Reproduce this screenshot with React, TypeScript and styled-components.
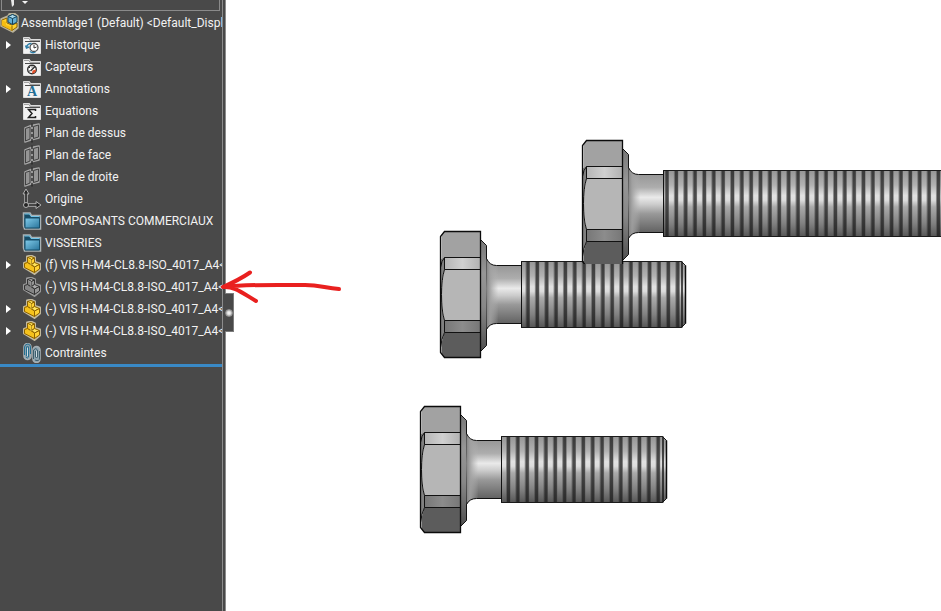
import React from 'react';
import styled, { createGlobalStyle } from 'styled-components';

const GlobalStyle = createGlobalStyle`
  * { box-sizing: border-box; }
  body { margin: 0; background: #ffffff; font-family: Roboto, 'Open Sans', sans-serif; }
`;

const Page = styled.div`
  position: relative;
  display: flex;
  min-height: 100vh;
  overflow: hidden;
`;

const Sidebar = styled.aside`
  flex: none;
  width: 223px;
  background: #494949;
  border-right: 1px solid #8c8c8c;
  color: #f2f2f2;
  font-size: 12px;
  overflow: hidden;
`;

const Splitter = styled.div`
  position: relative;
  flex: none;
  width: 3px;
  background: #494949;
  border-right: 1px solid #8c8c8c;
`;

const CollapseHandle = styled.button`
  position: absolute;
  top: 293px;
  left: 2px;
  display: flex;
  align-items: center;
  justify-content: center;
  width: 9px;
  height: 39px;
  padding: 0;
  border: 1px solid #7c7c7c;
  border-left: 0;
  background: #494949;
`;

const HandleDot = styled.span`
  flex: none;
  width: 8px;
  height: 8px;
  border: 1px solid #8f8f8f;
  border-radius: 50%;
  background: radial-gradient(#f0f0f0 25%, #a9a9a9 75%);
`;

const FilterBar = styled.div`
  display: flex;
  align-items: flex-start;
  height: 11px;
  margin: 0 2px 1px 1px;
  padding-left: 8px;
  border: 1px solid #8a8a8a;
  border-top: 0;
`;

const FilterButton = styled.button`
  display: flex;
  padding: 0;
  border: 0;
  background: none;
`;

const Tree = styled.ul`
  margin: 0;
  padding: 0;
  list-style: none;
  border-bottom: 3px solid #3989c6;
`;

const Row = styled.li<{ $root?: boolean }>`
  display: flex;
  align-items: center;
  height: 22px;
  padding-left: ${(p) => (p.$root ? '0' : '22px')};
  white-space: nowrap;

  &:has(> button) { padding-left: 0; }
`;

const Expander = styled.button`
  flex: none;
  display: flex;
  align-items: center;
  width: 22px;
  height: 22px;
  padding: 0 0 0 6px;
  border: 0;
  background: none;
`;

const Glyph = styled.svg`
  flex: none;
  display: block;
  width: 20px;
  height: 20px;
`;

const Label = styled.span<{ $root?: boolean }>`
  padding-left: ${(p) => (p.$root ? '1px' : '3px')};
  line-height: 22px;
`;

const Viewport = styled.main`
  flex: 1;
  min-width: 0;
  overflow: hidden;
  background: #ffffff;
`;

const Scene = styled.svg`
  display: block;
`;

const Markup = styled.svg`
  position: absolute;
  top: 268px;
  left: 217px;
  pointer-events: none;
`;

type IconName =
  | 'assembly' | 'history' | 'sensors' | 'notes' | 'equations'
  | 'plane' | 'origin' | 'folder' | 'part' | 'partGrey' | 'mates';

const FileFolder = ({ children }: { children: React.ReactNode }) => (
  <>
    <path d="M1.5 18.5V2.5H7.5L8.5 4.5H18.5V18.5Z" fill="#f2f2f2" stroke="#dddddd" />
    <path d="M2 3.5H7L8 5.5H18" fill="none" stroke="#a2a2a2" />
    <path d="M3 6.500H18" stroke="#4c4c4c" />
    {children}
  </>
);

const PartShape = ({ grey }: { grey?: boolean }) => {
  const line = grey ? '#343434' : '#8d6200';
  const top = grey ? '#a8a8a8' : '#ffe45c';
  const front = grey ? '#858585' : '#f6c21c';
  const side = grey ? '#969696' : '#ffd234';
  return (
    <>
      <path d="M5 1.500 9 .5 13 2.500V7L18 8.500V14.500L12.500 19 2 12.500V8L5 7Z" fill="#aaa18a" stroke={grey ? '#999999' : '#c3b99c'} strokeWidth="2" strokeLinejoin="round" />
      <path d="M2 8 5 7 6 2 12.500 10 12.500 18 2 12Z" fill={front} />
      <path d="M5.500 2.500 9 1.500 12.500 3 9.500 4.500Z" fill={top} stroke={line} />
      <path d="M5.500 2.500 9.500 4.500V9.500L5.500 8Z" fill={front} stroke={line} />
      <path d="M9.500 4.500 12.500 3V7.500L9.500 9.500Z" fill={side} stroke={line} />
      <path d="M9.500 9.500 12.500 7.500 17.500 9.500 12.500 12Z" fill={top} stroke={line} />
      <path d="M2.500 8.500 5.500 7.500 12.500 12V17.500L2.500 12.500Z" fill={front} stroke={line} />
      <path d="M12.500 12 17.500 9.500V14L12.500 17.500Z" fill={side} stroke={line} />
      <path d="M6 3.500 9 5V10" fill="none" stroke={top} strokeWidth=".8" />
    </>
  );
};

const shapes: Record<IconName, React.ReactNode> = {
  assembly: (
    <>
      <path d="M1 6 8 3 9 1 14 0 18 3V15L13 19 1 13Z" fill="#c9c1a4" stroke="#b9b299" strokeWidth="1.500" strokeLinejoin="round" />
      <path d="M2 7 7 5V10L12 12 17 10V14L12 17.500 2 12.500Z" fill="#ffd22e" stroke="#8b6100" />
      <path d="M2 7 6 9V12L12 14.500V17.500L2 12.500Z" fill="#f5bd12" />
      <path d="M12 13V17" stroke="#916700" />
      <path d="M8 3.500 12.500 1.500 17 3.500V9L12.500 11.500 8 9Z" fill="#62aed4" stroke="#17445c" />
      <path d="M8 3.500 12.500 5.500 17 3.500 12.500 1.500Z" fill="#a8d7e9" stroke="#17445c" />
      <path d="M12.500 5.500V11.500" stroke="#17445c" />
    </>
  ),
  history: (
    <FileFolder>
      <circle cx="12" cy="12.500" r="4" fill="#ffffff" stroke="#505050" strokeWidth="1.300" />
      <path d="M12 10V13L14.500 12" fill="none" stroke="#333333" />
      <path d="M4.500 12.500A5 5 0 0 1 9.500 8.500M3.500 10.500 4.500 13 7 12M8 16.500A5 5 0 0 0 13.500 17" fill="none" stroke="#2f7fa9" strokeWidth="1.400" />
    </FileFolder>
  ),
  sensors: (
    <FileFolder>
      <circle cx="10" cy="12.500" r="4.300" fill="#ffffff" stroke="#303030" strokeWidth="1.400" />
      <path d="M7 10.500H8M10 9.500V10.500M7 14H8" stroke="#303030" />
      <path d="M8.500 14 13 9.500" stroke="#303030" strokeWidth="1.500" />
      <path d="M10 16.500 10.500 13.500 14 12.500A4 4 0 0 1 10 16.500Z" fill="#e4512b" />
    </FileFolder>
  ),
  notes: (
    <FileFolder>
      <text x="10" y="17" textAnchor="middle" fontFamily="Liberation Serif, serif" fontWeight="700" fontSize="14" fill="#256f96">A</text>
    </FileFolder>
  ),
  equations: (
    <FileFolder>
      <path d="M13.500 10V8.500H6.500L10 12.500 6.500 16.500H13.500V15" fill="none" stroke="#222222" strokeWidth="1.500" />
    </FileFolder>
  ),
  plane: (
    <>
      <path d="M3 5 9 2.500 17 1V15L9 17 3 19Z" fill="#9a9a9a" stroke="#a6a6a6" strokeWidth="1.500" strokeLinejoin="round" />
      <path d="M3.500 5.500 8 4V16L3.500 18ZM11.500 3.500 16.500 2V14L11.500 15.500Z" fill="#949494" stroke="#424242" />
      <path d="M10 .5V4M10 6V9M10 11V14M10 16V19.500" stroke="#262626" strokeWidth="1.300" />
    </>
  ),
  origin: (
    <>
      <path d="M4 16V3M4 16H17" stroke="#b1b1b1" strokeWidth="3.500" fill="none" />
      <path d="M1 5 4 0 7 5ZM14 12.500 19 16 14 19.500Z" fill="#262626" stroke="#b1b1b1" />
      <path d="M4 16V4M4 16H16" stroke="#242424" strokeWidth="1.600" />
      <circle cx="4" cy="16" r="2.500" fill="#242424" stroke="#b1b1b1" />
    </>
  ),
  folder: (
    <>
      <path d="M1.500 2H8L9.500 4.500H18.500V18H2.500L1.500 15Z" fill="#174c66" stroke="#aab2b5" strokeWidth="1.500" />
      <path d="M2.500 3H7.500L9 5.500H17.500" fill="none" stroke="#73c4e7" />
      <path d="M3 7H17.500V17H3Z" fill="url(#folder-fill)" stroke="#164f6b" />
    </>
  ),
  part: <PartShape />,
  partGrey: <PartShape grey />,
  mates: (
    <>
      <path d="M2 4A3.500 3.500 0 0 1 9 4V13A3.500 3.500 0 0 1 2 13ZM11 7A3.500 3.500 0 0 1 18 7V16A3 3 0 0 1 11 16Z" fill="#8da3ae" stroke="#a5afb4" strokeWidth="1.600" />
      <path d="M4.500 13V4Q5.500 2 6.500 4V14Q5.500 16 4 14M2.500 12V4Q3 1 6 1Q8.500 1.500 8.500 4V11" fill="none" stroke="#256f91" />
      <path d="M13.500 8V14Q14.500 16 15.500 14V7Q14 4 11.500 7V16M13 17Q17.500 19 17.500 15V8" fill="none" stroke="#3d5e6d" />
      <path d="M5.500 5V13M14.500 8V14" stroke="#d2dee3" />
    </>
  ),
};

const Icon = ({ name }: { name: IconName }) => (
  <Glyph viewBox="0 0 20 20" aria-hidden="true">{shapes[name]}</Glyph>
);

const items: { icon: IconName; label: string; expandable?: boolean }[] = [
  { icon: 'history', label: 'Historique', expandable: true },
  { icon: 'sensors', label: 'Capteurs' },
  { icon: 'notes', label: 'Annotations', expandable: true },
  { icon: 'equations', label: 'Equations' },
  { icon: 'plane', label: 'Plan de dessus' },
  { icon: 'plane', label: 'Plan de face' },
  { icon: 'plane', label: 'Plan de droite' },
  { icon: 'origin', label: 'Origine' },
  { icon: 'folder', label: 'COMPOSANTS COMMERCIAUX' },
  { icon: 'folder', label: 'VISSERIES' },
  { icon: 'part', label: '(f) VIS H-M4-CL8.8-ISO_4017_A4<', expandable: true },
  { icon: 'partGrey', label: '(-) VIS H-M4-CL8.8-ISO_4017_A4<' },
  { icon: 'part', label: '(-) VIS H-M4-CL8.8-ISO_4017_A4<', expandable: true },
  { icon: 'part', label: '(-) VIS H-M4-CL8.8-ISO_4017_A4<', expandable: true },
  { icon: 'mates', label: 'Contraintes' },
];

type BoltProps = { x: number; y: number; length: number; first: number; open?: boolean };

/* Side view of a hex bolt; (x, y) is the top-left corner of the head. */
const Bolt = ({ x, y, length, first, open }: BoltProps) => {
  const end = 81 + length;
  const grooves: number[] = [];
  for (let g = first; g < end - 3; g += 9.36) grooves.push(g);
  return (
    <g transform={`translate(${x} ${y})`}>
      <path d="M40 8 46 14V114L40 120Z" fill="url(#washer)" stroke="#111111" />
      <path d="M46 27Q49 34 56 34H81V92H56Q49 92 46 98Z" fill="url(#neck)" />
      <path d="M46 27H70V98H46Z" fill="url(#neck-edge)" clipPath="url(#neck-clip)" />
      <path d="M46 27Q49 34 56 34H81M46 98Q49 92 56 92H81" fill="none" stroke="#111111" />
      <path d={open ? `M81 30H${end}V96H81Z` : `M81 30H${end - 4}L${end} 34V92L${end - 4} 96H81Z`} fill="url(#thread)" stroke="#151515" />
      {grooves.map((g) => (
        <g key={g}>
          <rect x={g - 2.500} y="30" width="4.500" height="66" fill="url(#groove-side)" />
          <rect x={g - 1.500} y="30" width="3" height="66" fill="url(#groove)" />
        </g>
      ))}
      <path d={`M81 30H${end - 4}M81 96H${end - 4}`} stroke="#1b1b1b" />
      <path d="M81 30V96" stroke="#111111" />
      {!open && <path d={`M${end - 3.500} 30V96`} stroke="#171717" strokeWidth="1.500" />}
      {!open && <path d={`M${end} 34V92`} stroke="#0c0c0c" strokeWidth="1.500" />}
      <path d="M4 0H40V26H5L1 38V4Z" fill="#a2a2a2" />
      <path d="M4 26H40V38H4Z" fill="url(#bevel-top)" />
      <path d="M4 38H40V89H4L1 68V58Z" fill="#b6b6b6" />
      <path d="M4 89H40V101H4Z" fill="url(#bevel-bottom)" />
      <path d="M4 101H40V126H4L1 122V112Z" fill="#5c5c5c" />
      <path d="M0 28 4 26V38Q1 48 1 63Q1 79 4 89V101L0 112Z" fill="#808080" />
      <path d="M4 26H40M4 38H40M4 89H40M4 101H40" stroke="#111111" />
      <path d="M4 38Q1 48 1 63Q1 79 4 89M4 26V38M4 89V101M4 26Q1 29 0 36M4 101Q1 107 0 116" fill="none" stroke="#111111" />
      <path d="M4 0H40V126H4L0 121V5Z" fill="none" stroke="#0b0b0b" strokeWidth="1.300" />
    </g>
  );
};

const Model = () => (
  <Scene width="100%" height="611" role="img" aria-label="Trois vis à tête hexagonale">
    <defs>
      <linearGradient id="thread" x1="0" y1="0" x2="0" y2="1">
        <stop offset="0" stopColor="#969696" />
        <stop offset=".22" stopColor="#b2b2b2" />
        <stop offset=".38" stopColor="#e1e1e1" />
        <stop offset=".45" stopColor="#dddddd" />
        <stop offset=".55" stopColor="#ababab" />
        <stop offset=".8" stopColor="#828282" />
        <stop offset="1" stopColor="#565656" />
      </linearGradient>
      <linearGradient id="groove" x1="0" y1="0" x2="0" y2="1">
        <stop offset="0" stopColor="#3a3a3a" />
        <stop offset=".4" stopColor="#4c4c4c" />
        <stop offset="1" stopColor="#2a2a2a" />
      </linearGradient>
      <linearGradient id="groove-side" x1="0" y1="0" x2="0" y2="1">
        <stop offset="0" stopColor="#707070" />
        <stop offset=".4" stopColor="#8f8f8f" />
        <stop offset="1" stopColor="#4a4a4a" />
      </linearGradient>
      <linearGradient id="neck" x1="0" y1="0" x2="0" y2="1">
        <stop offset="0" stopColor="#8b8b8b" />
        <stop offset=".28" stopColor="#adadad" />
        <stop offset=".42" stopColor="#eaeaea" />
        <stop offset=".52" stopColor="#cccccc" />
        <stop offset=".65" stopColor="#999999" />
        <stop offset="1" stopColor="#505050" />
      </linearGradient>
      <linearGradient id="neck-edge">
        <stop offset="0" stopColor="#858585" />
        <stop offset=".15" stopColor="#a0a0a0" stopOpacity=".9" />
        <stop offset=".5" stopColor="#b5b5b5" stopOpacity="0" />
      </linearGradient>
      <clipPath id="neck-clip">
        <path d="M46 27Q49 34 56 34H81V92H56Q49 92 46 98Z" />
      </clipPath>
      <linearGradient id="washer" x1="0" y1="0" x2="0" y2="1">
        <stop offset="0" stopColor="#777777" />
        <stop offset=".3" stopColor="#969696" />
        <stop offset=".6" stopColor="#888888" />
        <stop offset="1" stopColor="#505050" />
      </linearGradient>
      <linearGradient id="bevel-top">
        <stop offset="0" stopColor="#b5b5b5" />
        <stop offset=".5" stopColor="#d0d0d0" />
        <stop offset="1" stopColor="#b1b1b1" />
      </linearGradient>
      <linearGradient id="bevel-bottom">
        <stop offset="0" stopColor="#777777" />
        <stop offset=".5" stopColor="#8c8c8c" />
        <stop offset="1" stopColor="#777777" />
      </linearGradient>
      <clipPath id="behind">
        <rect width="4000" height="264" />
      </clipPath>
    </defs>
    <Bolt x={194.500} y={406.500} length={165} first={88} />
    <Bolt x={214.500} y={231.500} length={164} first={87.500} />
    <g clipPath="url(#behind)">
      <Bolt x={356.500} y={140.500} length={3000} first={84.500} open />
    </g>
  </Scene>
);

export default function App() {
  return (
    <>
      <GlobalStyle />
      <Page>
        <Sidebar>
          <FilterBar>
            <FilterButton aria-label="Filtrer">
              <svg width="18" height="8" aria-hidden="true">
                <path d="M1 0H4V5L2 7Z" fill="#e8e8e8" />
                <path d="M12 1H18L15 4Z" fill="#f4f4f4" />
              </svg>
            </FilterButton>
          </FilterBar>
          <Tree>
            <Row $root>
              <Icon name="assembly" />
              <Label $root>Assemblage1 (Default) &lt;Default_Displ</Label>
            </Row>
            {items.map((item, i) => (
              <Row key={i}>
                {item.expandable && (
                  <Expander aria-label={`Développer ${item.label}`}>
                    <svg width="5" height="8" aria-hidden="true">
                      <path d="M0 0 5 4 0 8Z" fill="#ffffff" />
                    </svg>
                  </Expander>
                )}
                <Icon name={item.icon} />
                <Label>{item.label}</Label>
              </Row>
            ))}
          </Tree>
        </Sidebar>
        <Splitter>
          <CollapseHandle aria-label="Réduire le panneau">
            <HandleDot />
          </CollapseHandle>
        </Splitter>
        <Viewport>
          <Model />
        </Viewport>
        <Markup width="128" height="38" aria-hidden="true">
          <path d="M122 21C108 20 103 17 88 17C60 17 33 16 6 19M33 4.500C25 10 15 15 6 19C17 18 24 24 39 33" fill="none" stroke="#e9201f" strokeWidth="4" strokeLinecap="round" strokeLinejoin="round" />
        </Markup>
        <svg width="0" height="0" aria-hidden="true">
          <defs>
            <linearGradient id="folder-fill" x1="0" y1="0" x2="1" y2="1">
              <stop offset="0" stopColor="#82cceb" />
              <stop offset="1" stopColor="#28749b" />
            </linearGradient>
          </defs>
        </svg>
      </Page>
    </>
  );
}
